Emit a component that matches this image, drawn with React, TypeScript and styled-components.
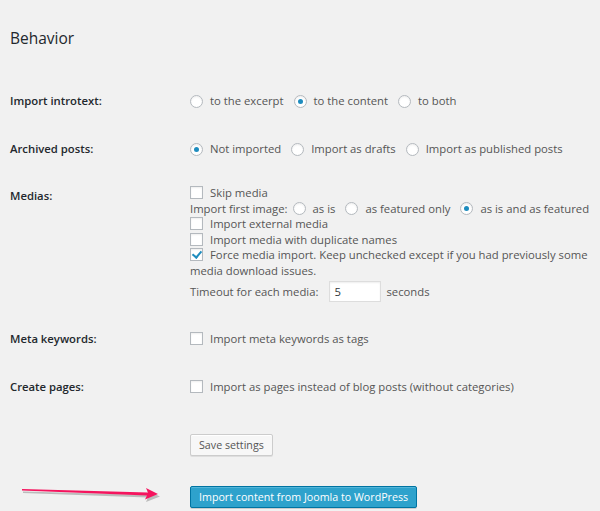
import { createGlobalStyle, styled } from "styled-components";

const GlobalStyle = createGlobalStyle`
  body {
    margin: 0;
    background: #f1f1f1;
    font-family: "Open Sans", "Noto Sans", sans-serif;
    font-size: 11.3px;
    color: #555;
  }
`;

const introOptions = [
  { label: "to the excerpt", checked: false },
  { label: "to the content", checked: true },
  { label: "to both", checked: false },
];

const archivedOptions = [
  { label: "Not imported", checked: true },
  { label: "Import as drafts", checked: false },
  { label: "Import as published posts", checked: false },
];

const firstImageOptions = [
  { label: "as is", checked: false },
  { label: "as featured only", checked: false },
  { label: "as is and as featured", checked: true },
];

// pink pointer next to the import button
const Arrow = () => (
  <svg width="170" height="24" viewBox="0 0 170 24">
    <path d="M12 5 L138 8.5 L136 4 L149 10 L135 15.5 L137 11 L12 6.5 Z" fill="#5a5a5a" opacity="0.35" transform="translate(1 1.5)" />
    <path d="M12 4 L138 7.5 L136 3 L148 9 L135 14.5 L137 10.5 L12 5.6 Z" fill="#f5145e" />
  </svg>
);

const App = () => {
  return (
    <Page>
      <GlobalStyle />
      <Heading>Behavior</Heading>

      <Row $pad={16}>
        <Label>Import introtext:</Label>
        <Options>
          {introOptions.map((o) => (
            <Choice key={o.label}>
              <Radio type="radio" name="intro" defaultChecked={o.checked} />
              {o.label}
            </Choice>
          ))}
        </Options>
      </Row>

      <Row $pad={16}>
        <Label>Archived posts:</Label>
        <Options>
          {archivedOptions.map((o) => (
            <Choice key={o.label}>
              <Radio type="radio" name="archived" defaultChecked={o.checked} />
              {o.label}
            </Choice>
          ))}
        </Options>
      </Row>

      <Row $pad={12}>
        <Label $offset={3}>Medias:</Label>
        <div>
          <Line>
            <Choice>
              <Check type="checkbox" />
              Skip media
            </Choice>
          </Line>
          <Line>
            <Prefix>Import first image:</Prefix>
            {firstImageOptions.map((o) => (
              <Choice key={o.label}>
                <Radio type="radio" name="first" defaultChecked={o.checked} />
                {o.label}
              </Choice>
            ))}
          </Line>
          <Line>
            <Choice>
              <Check type="checkbox" />
              Import external media
            </Choice>
          </Line>
          <Line>
            <Choice>
              <Check type="checkbox" />
              Import media with duplicate names
            </Choice>
          </Line>
          <WrapLine>
            <Check type="checkbox" defaultChecked />
            Force media import. Keep unchecked except if you had previously some media download issues.
          </WrapLine>
          <Timeout>
            Timeout for each media:
            <NumberInput type="text" defaultValue="5" />
            seconds
          </Timeout>
        </div>
      </Row>

      <Row $pad={16}>
        <Label>Meta keywords:</Label>
        <Options>
          <Choice>
            <Check type="checkbox" />
            Import meta keywords as tags
          </Choice>
        </Options>
      </Row>

      <Row $pad={16}>
        <Label>Create pages:</Label>
        <Options>
          <Choice>
            <Check type="checkbox" />
            Import as pages instead of blog posts (without categories)
          </Choice>
        </Options>
      </Row>

      <Actions>
        <span />
        <SecondaryButton>Save settings</SecondaryButton>
      </Actions>

      <ImportRow>
        <Arrow />
        <PrimaryButton>Import content from Joomla to WordPress</PrimaryButton>
      </ImportRow>
    </Page>
  );
};

const Page = styled.div`
  padding: 0 0 0 10px;
  width: 590px;
`;

const Heading = styled.h3`
  margin: 28px 0 29px;
  font-size: 15.5px;
  line-height: 20px;
  font-weight: 400;
  color: #23282d;
`;

const Row = styled.div<{ $pad: number }>`
  display: grid;
  grid-template-columns: 180px 410px;
  padding: ${(p) => p.$pad}px 0;
  line-height: 16px;
`;

const Label = styled.div<{ $offset?: number }>`
  font-weight: 600;
  color: #23282d;
  padding-top: ${(p) => p.$offset || 0}px;
`;

const Options = styled.div`
  display: flex;
  align-items: center;
`;

const Choice = styled.label`
  display: inline-flex;
  align-items: center;
  flex: none;
  gap: 7px;
  margin-right: 10px;
  white-space: nowrap;
`;

const Radio = styled.input`
  appearance: none;
  margin: 0;
  width: 13px;
  height: 13px;
  border: 1px solid #b4b9be;
  border-radius: 50%;
  background: #fff;
  box-shadow: inset 0 1px 2px rgba(0, 0, 0, 0.07);
  box-sizing: border-box;
  display: inline-flex;
  align-items: center;
  justify-content: center;
  &:checked::before {
    content: "";
    width: 5px;
    height: 5px;
    border-radius: 50%;
    background: #1e8cbe;
  }
`;

const Check = styled.input`
  appearance: none;
  margin: 0;
  width: 13px;
  height: 13px;
  flex: none;
  border: 1px solid #b4b9be;
  background: #fff;
  box-shadow: inset 0 1px 2px rgba(0, 0, 0, 0.07);
  box-sizing: border-box;
  position: relative;
  &:checked::before {
    content: "";
    position: absolute;
    left: 3px;
    top: 0px;
    width: 4px;
    height: 7px;
    border: solid #1e8cbe;
    border-width: 0 2px 2px 0;
    transform: rotate(40deg);
  }
`;

const Line = styled.div`
  display: flex;
  align-items: center;
  height: 15.6px;
  line-height: 15.6px;
  white-space: nowrap;
`;

const Prefix = styled.span`
  flex: none;
  margin-right: 5px;
`;

const WrapLine = styled.label`
  display: block;
  line-height: 15.6px;
  ${Check} {
    vertical-align: -2px;
    margin-right: 7px;
  }
`;

const Timeout = styled.div`
  display: flex;
  align-items: center;
  margin-top: 2px;
  height: 22px;
`;

const NumberInput = styled.input`
  width: 52px;
  height: 21px;
  box-sizing: border-box;
  margin: 0 5px 0 11px;
  padding: 0 4px;
  border: 1px solid #ddd;
  background: #fff;
  box-shadow: inset 0 1px 2px rgba(0, 0, 0, 0.07);
  font: inherit;
  color: #32373c;
  outline: none;
`;

const Actions = styled.div`
  display: grid;
  grid-template-columns: 180px auto;
  justify-content: start;
  margin-top: 23px;
`;

const ButtonBase = styled.button`
  height: 22px;
  padding: 0 8px;
  border-radius: 2px;
  font-family: inherit;
  font-size: 10.7px;
  line-height: 20px;
  cursor: pointer;
`;

const SecondaryButton = styled(ButtonBase)`
  background: #f7f7f7;
  border: 1px solid #ccc;
  color: #555;
  box-shadow: inset 0 1px 0 #fff, 0 1px 0 rgba(0, 0, 0, 0.08);
`;

const PrimaryButton = styled(ButtonBase)`
  background: #2ea2cc;
  border: 1px solid #0074a2;
  color: #fff;
  box-shadow: inset 0 1px 0 rgba(120, 200, 230, 0.5), 0 1px 0 rgba(0, 0, 0, 0.15);
`;

const ImportRow = styled.div`
  display: grid;
  grid-template-columns: 180px auto;
  justify-content: start;
  align-items: center;
  margin-top: 29px;
`;

export default App;
